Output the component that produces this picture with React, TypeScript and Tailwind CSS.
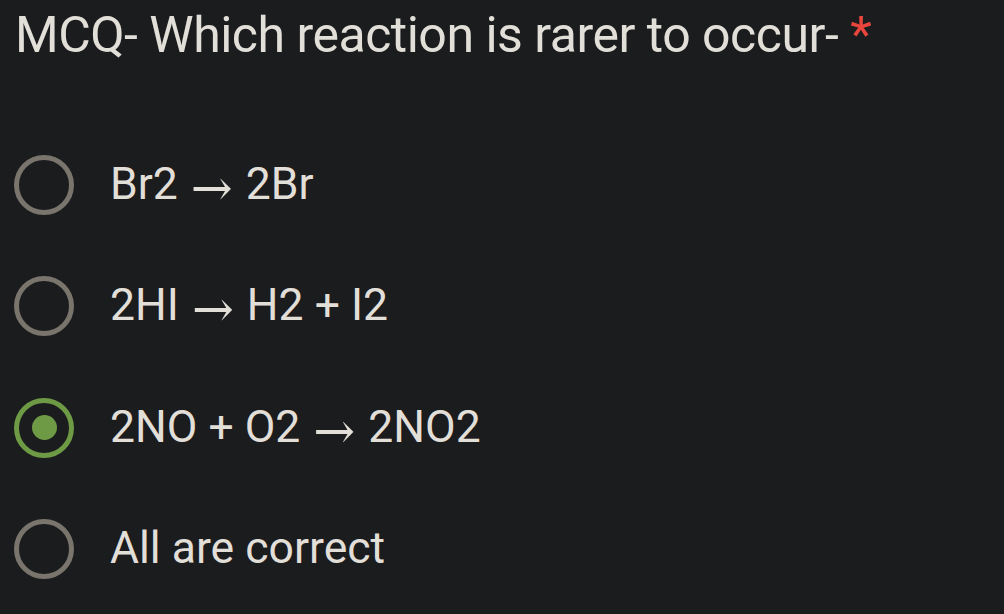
import React, { useState } from 'react';

const options = [
  'Br2 → 2Br',
  '2HI → H2 + I2',
  '2NO + O2 → 2NO2',
  'All are correct',
];

// the arrow glyph comes from a serif face so it stays long and thin
function Formula({ text }: { text: string }) {
  const parts = text.split('→');
  return (
    <>
      {parts.map((p, i) => (
        <React.Fragment key={i}>
          {i > 0 && (
            <span className="mx-[2px] [font-family:DejaVu_Serif,serif] text-[50px] leading-[0] align-[-6px]">→</span>
          )}
          {p}
        </React.Fragment>
      ))}
    </>
  );
}

function Radio({ checked }: { checked: boolean }) {
  return (
    <span
      className={
        checked
          ? 'flex h-[60px] w-[60px] shrink-0 items-center justify-center rounded-full border-[5px] border-[#6f9a45]'
          : 'flex h-[60px] w-[60px] shrink-0 items-center justify-center rounded-full border-[5px] border-[#7a756c]'
      }
    >
      {checked && <span className="h-[25px] w-[25px] rounded-full bg-[#6f9a45]" />}
    </span>
  );
}

export default function App() {
  const [selected, setSelected] = useState(2);

  return (
    <main className="h-[614px] w-full overflow-hidden bg-[#1b1c1e] [font-family:Roboto,sans-serif] text-[#e2dfd8]">
      <h1 className="pl-[15px] pt-[5px] text-[50px] leading-[60px] font-normal tracking-[-0.5px] whitespace-nowrap">
        MCQ- Which reaction is rarer to occur- <span className="text-[#e8453c]">*</span>
      </h1>

      <div className="mt-[59px] flex flex-col">
        {options.map((opt, i) => (
          <button
            key={opt}
            onClick={() => setSelected(i)}
            className="flex h-[121.5px] items-center gap-[36px] pl-[14px] text-left"
          >
            <Radio checked={selected === i} />
            <span className="pb-[2px] text-[44.5px] leading-none whitespace-nowrap">
              <Formula text={opt} />
            </span>
          </button>
        ))}
      </div>
    </main>
  );
}
